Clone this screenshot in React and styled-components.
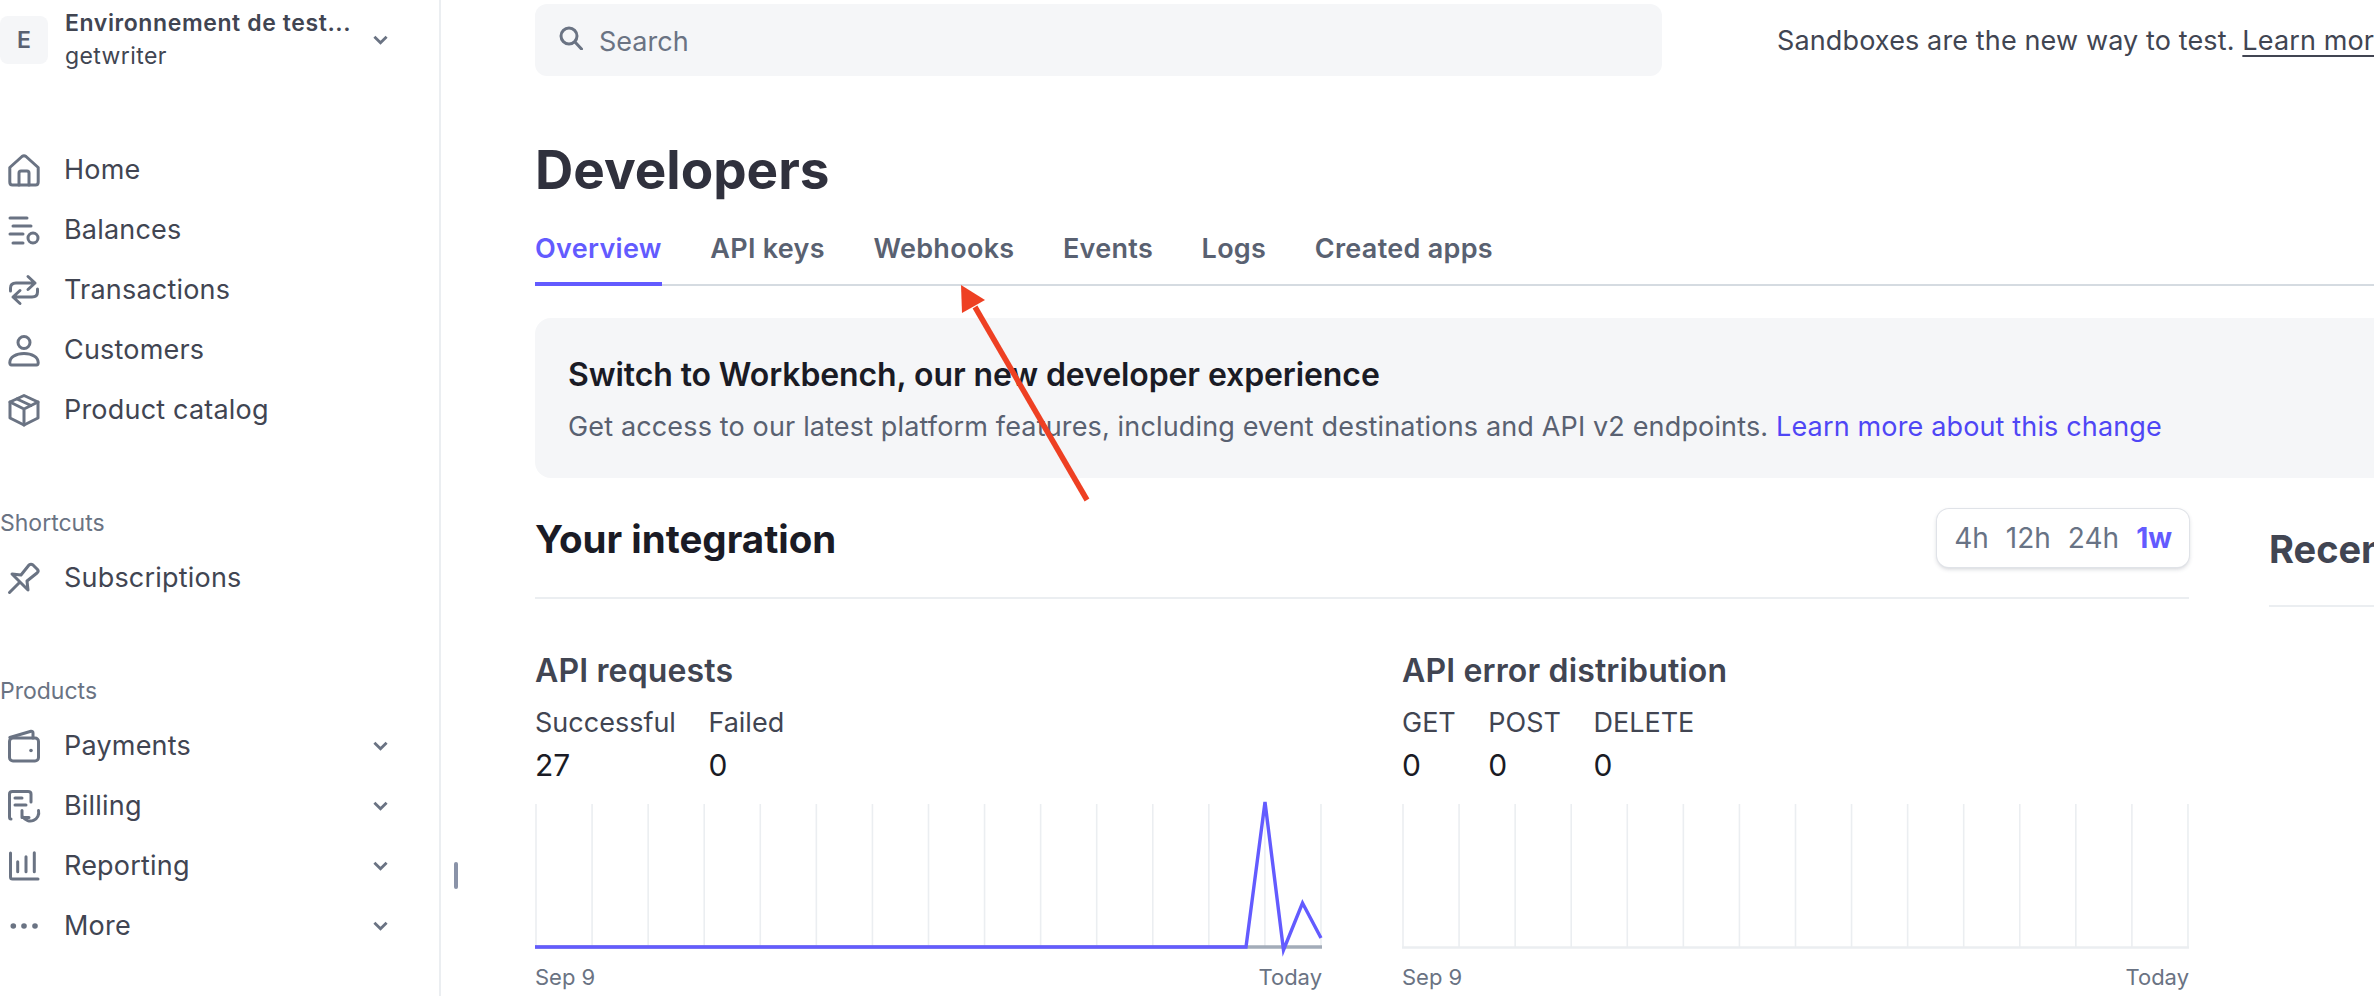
import React from "react";
import styled, { createGlobalStyle } from "styled-components";

const navIcons = {
  home: (
    <>
      <path d="M1.8 13.5 L14 2.5 Q16 1 18 2.5 L30.2 13.5 V28 Q30.2 31 27.5 31 H4.5 Q1.8 31 1.8 28 Z" />
      <path d="M11 31 V19 Q11 17 13 17 H19 Q21 17 21 19 V31" />
    </>
  ),
  balances: (
    <>
      <path d="M2 4 H19 M5 12 H23 M2 20 H15 M5 29 H15" />
      <circle cx="25" cy="24" r="5" />
    </>
  ),
  transactions: (
    <>
      <path d="M2.5 17 V14 Q2.5 9 8 9 H27 M20 2.5 L27 9 L20 15.5" />
      <path d="M29.5 15 V18 Q29.5 23 24 23 H5 M12 16.5 L5 23 L12 29.5" />
    </>
  ),
  customers: (
    <>
      <circle cx="16" cy="8.5" r="6" />
      <path d="M3.5 31 Q1.8 31 1.8 28.5 C1.8 23 8 19.5 16 19.5 C24 19.5 30.2 23 30.2 28.5 Q30.2 31 28.5 31 Z" />
    </>
  ),
  product: (
    <>
      <path d="M16 1.5 L30 8 V24 L16 31 L2 24 V8 Z" />
      <path d="M2 8 L16 15 L30 8 M16 15 V31 M9 5 L23 11.5" />
    </>
  ),
  pin: (
    <>
      <path d="M1.5 30.5 L11 21" />
      <path d="M4 12 L13 13 L21 3 Q23 1.5 25 3 L29.5 7.5 Q31 9.5 29 11 L19 19 L20 28 Z" />
    </>
  ),
  wallet: (
    <>
      <rect x="1.5" y="8" width="29" height="23" rx="3.5" />
      <path d="M1.8 7.5 L23 1.2 Q25 1 25 3 V8" />
      <circle cx="23" cy="20.5" r="1.8" fill="#6a7383" stroke="none" />
    </>
  ),
  billing: (
    <>
      <path d="M3 29 Q1.5 29 1.5 27 V4 Q1.5 1.5 4.5 1.5 H20 Q23 1.5 23 4 V12" />
      <path d="M7 8 H14 M7 15 H18" />
      <path d="M30.5 20.5 A8.5 8.5 0 0 1 15 27 M14 20.5 V27.5 H21" />
    </>
  ),
  reporting: (
    <>
      <path d="M2.5 3 V27 Q2.5 29 4.5 29 H30" />
      <path d="M9.7 11.7 V21.7 M18 6.7 V21.7 M26.3 2.7 V21.7" />
    </>
  ),
  more: (
    <>
      <circle cx="5.3" cy="16" r="2.8" fill="#6a7383" stroke="none" />
      <circle cx="16" cy="16" r="2.8" fill="#6a7383" stroke="none" />
      <circle cx="27" cy="16" r="2.8" fill="#6a7383" stroke="none" />
    </>
  ),
};

const mainNav = [
  { icon: "home", label: "Home" },
  { icon: "balances", label: "Balances" },
  { icon: "transactions", label: "Transactions" },
  { icon: "customers", label: "Customers" },
  { icon: "product", label: "Product catalog" },
];

const productNav = [
  { icon: "wallet", label: "Payments" },
  { icon: "billing", label: "Billing" },
  { icon: "reporting", label: "Reporting" },
  { icon: "more", label: "More" },
];

const tabs = ["Overview", "API keys", "Webhooks", "Events", "Logs", "Created apps"];
const ranges = ["4h", "12h", "24h", "1w"];

const Chevron = () => (
  <ChevronSvg viewBox="0 0 16 10">
    <path d="M1.5 1.5 L8 8 L14.5 1.5" />
  </ChevronSvg>
);

const NavRow = ({ icon, label, expandable }) => (
  <NavItem>
    <NavIcon viewBox="0 0 32 32">{navIcons[icon]}</NavIcon>
    <NavLabel>{label}</NavLabel>
    {expandable && <Chevron />}
  </NavItem>
);

const gridLines = Array.from({ length: 15 }, (_, i) => 1 + i * 56.07);

const Chart = ({ series }) => (
  <ChartSvg viewBox="0 0 787 146">
    {gridLines.map((x) => (
      <line key={x} x1={x} x2={x} y1="0" y2="143" stroke="#ebeef1" strokeWidth="1.6" />
    ))}
    {series ? (
      <>
        <line x1="0" x2="787" y1="143" y2="143" stroke="#a3acb9" strokeWidth="3.4" />
        <polyline
          points="0,143 711,143 730,-2 748.5,146 767.5,99 786,134"
          fill="none"
          stroke="#635bff"
          strokeWidth="3.4"
        />
      </>
    ) : (
      <line x1="0" x2="787" y1="143.5" y2="143.5" stroke="#ebeef1" strokeWidth="2.4" />
    )}
  </ChartSvg>
);

const ChartCard = ({ title, metrics, series }) => (
  <Card>
    <CardTitle>{title}</CardTitle>
    <Metrics>
      {metrics.map((m) => (
        <Metric key={m.label}>
          <MetricLabel>{m.label}</MetricLabel>
          <MetricValue>{m.value}</MetricValue>
        </Metric>
      ))}
    </Metrics>
    <Chart series={series} />
    <AxisLabels>
      <span>Sep 9</span>
      <span>Today</span>
    </AxisLabels>
  </Card>
);

export default function App() {
  return (
    <Page>
      <GlobalStyle />
      <Sidebar>
        <Account>
          <AccountBadge>E</AccountBadge>
          <AccountText>
            <AccountName>Environnement de test...</AccountName>
            <AccountSub>getwriter</AccountSub>
          </AccountText>
          <Chevron />
        </Account>
        <NavList>
          {mainNav.map((n) => (
            <NavRow key={n.label} {...n} />
          ))}
        </NavList>
        <SectionLabel>Shortcuts</SectionLabel>
        <NavRow icon="pin" label="Subscriptions" />
        <SectionLabel>Products</SectionLabel>
        {productNav.map((n) => (
          <NavRow key={n.label} {...n} expandable />
        ))}
      </Sidebar>

      <Main>
        <ResizeHandle />
        <TopBar>
          <SearchBox>
            <svg width="24" height="24" viewBox="0 0 24 24" fill="none" stroke="#6a7383" strokeWidth="3" strokeLinecap="round">
              <circle cx="10" cy="10" r="8" />
              <path d="M16 16 L22.5 23" />
            </svg>
            <SearchText>Search</SearchText>
          </SearchBox>
          <Notice>
            Sandboxes are the new way to test. <NoticeLink>Learn more</NoticeLink>
          </Notice>
        </TopBar>

        <Title>Developers</Title>
        <Tabs>
          {tabs.map((t, i) => (
            <Tab key={t} $active={i === 0}>
              {t}
            </Tab>
          ))}
        </Tabs>

        <Banner>
          <BannerTitle>Switch to Workbench, our new developer experience</BannerTitle>
          <BannerText>
            Get access to our latest platform features, including event destinations and API v2 endpoints.{" "}
            <BannerLink>Learn more about this change</BannerLink>
          </BannerText>
        </Banner>

        <Columns>
          <div>
            <IntegrationHead>
              <IntegrationTitle>Your integration</IntegrationTitle>
              <RangePicker>
                {ranges.map((r) => (
                  <Range key={r} $active={r === "1w"}>
                    {r}
                  </Range>
                ))}
              </RangePicker>
            </IntegrationHead>
            <Cards>
              <ChartCard
                title="API requests"
                series
                metrics={[
                  { label: "Successful", value: "27" },
                  { label: "Failed", value: "0" },
                ]}
              />
              <ChartCard
                title="API error distribution"
                metrics={[
                  { label: "GET", value: "0" },
                  { label: "POST", value: "0" },
                  { label: "DELETE", value: "0" },
                ]}
              />
            </Cards>
          </div>
          <RecentHead>Recent errors</RecentHead>
        </Columns>

        <ArrowOverlay viewBox="0 0 140 230">
          <path d="M126 215 L14 22" stroke="#ee4023" strokeWidth="5.5" />
          <path d="M0 0 L1 28 L24 15 Z" fill="#ee4023" />
        </ArrowOverlay>
      </Main>
    </Page>
  );
}

//styles

const GlobalStyle = createGlobalStyle`
  html, body {
    margin: 0;
    height: 996px;
    overflow: hidden;
    background: #fff;
    font-family: Inter, "Noto Sans", sans-serif;
  }
  * {
    box-sizing: border-box;
  }
`;

const Page = styled.div`
  display: flex;
  width: 2374px;
  height: 996px;
  overflow: hidden;
  background: #fff;
`;

const Sidebar = styled.aside`
  flex: 0 0 441px;
  padding-top: 16px;
  border-right: 2px solid #ebeef1;
`;

const Account = styled.div`
  display: flex;
  align-items: center;
  height: 48px;
  padding-right: 51px;
`;

const AccountBadge = styled.div`
  display: flex;
  align-items: center;
  justify-content: center;
  flex: 0 0 48px;
  height: 48px;
  border-radius: 8px;
  background: #f5f6f8;
  color: #596171;
  font-size: 23px;
  font-weight: 600;
`;

const AccountText = styled.div`
  flex: 1;
  margin-left: 17px;
`;

const AccountName = styled.div`
  margin-top: -1px;
  color: #414552;
  font-size: 23px;
  font-weight: 600;
  letter-spacing: 0.6px;
  line-height: 33px;
  white-space: nowrap;
`;

const AccountSub = styled.div`
  color: #414552;
  font-size: 23px;
  letter-spacing: 0.4px;
  line-height: 33px;
`;

const ChevronSvg = styled.svg`
  flex: 0 0 15px;
  width: 15px;
  height: 10px;
  fill: none;
  stroke: #6a7383;
  stroke-width: 3;
`;

const NavList = styled.nav`
  margin-top: 76px;
`;

const NavItem = styled.div`
  display: flex;
  align-items: center;
  height: 60px;
  padding-right: 51px;
`;

const NavIcon = styled.svg`
  flex: 0 0 32px;
  width: 32px;
  height: 32px;
  margin-left: 8px;
  overflow: visible;
  fill: none;
  stroke: #6a7383;
  stroke-width: 3;
  stroke-linejoin: round;
  stroke-linecap: round;
`;

const NavLabel = styled.span`
  flex: 1;
  margin-left: 24px;
  color: #414552;
  font-size: 27px;
  letter-spacing: 0.2px;
  line-height: 36px;
`;

const SectionLabel = styled.div`
  height: 34px;
  margin-top: 66px;
  margin-bottom: 8px;
  color: #6a7383;
  font-size: 23px;
  line-height: 34px;
`;

const Main = styled.main`
  position: relative;
  flex: 1;
  min-width: 0;
  padding: 4px 0 0 94px;
  overflow: hidden;
`;

const ResizeHandle = styled.div`
  position: absolute;
  left: 13px;
  top: 862px;
  width: 4px;
  height: 27px;
  border-radius: 2px;
  background: #8a93a8;
`;

const TopBar = styled.div`
  display: flex;
  align-items: center;
  height: 72px;
`;

const SearchBox = styled.div`
  display: flex;
  align-items: center;
  flex: 0 0 1127px;
  height: 72px;
  padding: 0 0 4px 24px;
  border-radius: 12px;
  background: #f5f6f8;
`;

const SearchText = styled.span`
  margin: 6px 0 0 16px;
  color: #6a7383;
  font-size: 27px;
`;

const Notice = styled.div`
  margin-left: 115px;
  color: #414552;
  font-size: 27px;
  letter-spacing: 0.13px;
  white-space: nowrap;
`;

const NoticeLink = styled.span`
  text-decoration: underline;
  text-underline-offset: 5px;
  text-decoration-thickness: 2px;
`;

const Title = styled.h1`
  margin: 62px 0 0;
  color: #30313d;
  font-size: 53px;
  font-weight: 700;
  line-height: 64px;
`;

const Tabs = styled.div`
  display: flex;
  gap: 48.5px;
  margin-top: 30px;
  border-bottom: 2px solid #d5dbe1;
`;

const Tab = styled.div`
  height: 54px;
  margin-bottom: -2px;
  color: ${(p) => (p.$active ? "#635bff" : "#596171")};
  border-bottom: ${(p) => (p.$active ? "4px solid #635bff" : "none")};
  font-size: 27px;
  font-weight: 600;
  letter-spacing: 0.3px;
  line-height: 33px;
`;

const Banner = styled.section`
  height: 160px;
  margin-top: 32px;
  padding: 37px 33px 0;
  border-radius: 16px 0 0 16px;
  background: #f5f6f8;
`;

const BannerTitle = styled.div`
  color: #1a1b25;
  font-size: 32px;
  font-weight: 600;
  letter-spacing: -0.1px;
  line-height: 40px;
`;

const BannerText = styled.div`
  margin-top: 14px;
  color: #596171;
  font-size: 27px;
  letter-spacing: 0.15px;
  line-height: 36px;
  white-space: nowrap;
`;

const BannerLink = styled.span`
  color: #4f46f5;
`;

const Columns = styled.div`
  display: grid;
  grid-template-columns: 1654px 400px;
  column-gap: 80px;
  margin-top: 31px;
`;

const IntegrationHead = styled.div`
  display: flex;
  align-items: center;
  justify-content: space-between;
  padding-bottom: 30px;
  border-bottom: 2px solid #ebeef1;
`;

const IntegrationTitle = styled.h2`
  margin: 2px 0 0;
  color: #1a1b25;
  font-size: 38.5px;
  font-weight: 700;
  line-height: 48px;
`;

const RangePicker = styled.div`
  display: flex;
  align-items: center;
  gap: 17px;
  height: 58px;
  padding: 0 17px;
  border-radius: 12px;
  background: #fff;
  box-shadow: 0 0 0 1px #e0e3e8, 0 2px 4px rgba(60, 66, 87, 0.25);
`;

const Range = styled.span`
  color: ${(p) => (p.$active ? "#635bff" : "#687385")};
  font-size: 28px;
  font-weight: ${(p) => (p.$active ? 700 : 400)};
`;

const RecentHead = styled.h2`
  height: 98px;
  margin: 0;
  padding-top: 18px;
  color: #414552;
  font-size: 38px;
  font-weight: 700;
  line-height: 44px;
  white-space: nowrap;
  border-bottom: 2px solid #ebeef1;
`;

const Cards = styled.div`
  display: grid;
  grid-template-columns: 787px 787px;
  column-gap: 80px;
  margin-top: 52px;
`;

const Card = styled.article``;

const CardTitle = styled.h3`
  margin: 0;
  color: #414552;
  font-size: 32px;
  font-weight: 600;
  letter-spacing: 0.15px;
  line-height: 40px;
`;

const Metrics = styled.div`
  display: flex;
  gap: 32.5px;
  margin-top: 14px;
`;

const Metric = styled.div``;

const MetricLabel = styled.div`
  color: #414552;
  font-size: 27px;
  line-height: 36px;
`;

const MetricValue = styled.div`
  margin-top: 3.5px;
  color: #1a1b25;
  font-size: 30px;
  line-height: 40px;
`;

const ChartSvg = styled.svg`
  display: block;
  width: 787px;
  height: 146px;
  margin-top: 19px;
  overflow: visible;
`;

const AxisLabels = styled.div`
  display: flex;
  justify-content: space-between;
  margin-top: 13px;
  color: #6a7383;
  font-size: 22px;
  line-height: 28px;
`;

const ArrowOverlay = styled.svg`
  position: absolute;
  left: 520px;
  top: 285px;
  width: 140px;
  height: 230px;
  pointer-events: none;
  fill: none;
`;
